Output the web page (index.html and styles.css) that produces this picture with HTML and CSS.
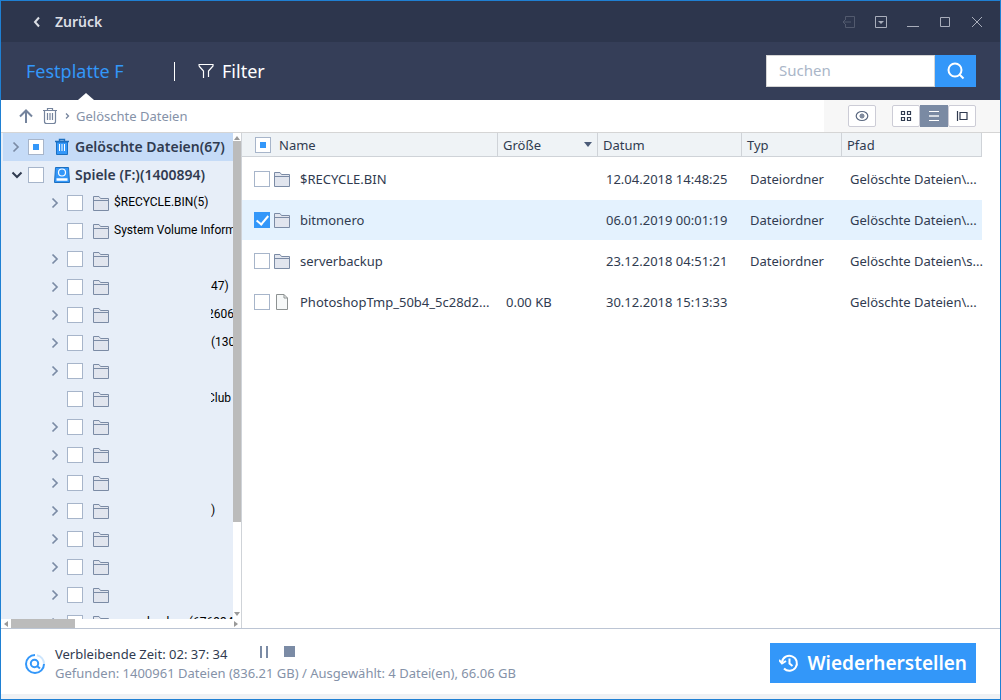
FILE: index.html
```html
<!DOCTYPE html>
<html lang="de">
<head>
<meta charset="utf-8">
<title>Datenrettung</title>
<link rel="stylesheet" href="styles.css">
</head>
<body>
<svg class="defs" aria-hidden="true">
  <symbol id="folder" viewBox="0 0 18 18"><path d="M1.500 16.500V2.500H7L8.500 4.500H16.500V16.500Z" fill="#e1e5ee" stroke="#7b8ba5"/><path d="M1.500 6.500H16.500" stroke="#7b8ba5"/></symbol>
  <symbol id="chev" viewBox="0 0 8 12"><path d="M1.500 1.500L6 6L1.500 10.500" fill="none" stroke="currentColor" stroke-width="1.700"/></symbol>
</svg>
<div class="window">
  <header class="titlebar">
    <button class="back"><svg width="8" height="12" viewBox="0 0 8 12"><path d="M6 1.500L2 6L6 10.500" fill="none" stroke="currentColor" stroke-width="2"/></svg>Zurück</button>
    <div class="winctl">
      <button class="dim" aria-label="Exportieren"><svg width="14" height="14" viewBox="0 0 14 14"><path d="M3.500 4V1.500H12.500V12.500H3.500V10M9 7H1M4 4L1 7L4 10" fill="none" stroke="currentColor"/></svg></button>
      <button aria-label="Menü"><svg width="14" height="14" viewBox="0 0 14 14"><path d="M1.500 1.500H12.500V12.500H1.500Z" fill="none" stroke="currentColor"/><path d="M4 6H10L7 9Z" fill="currentColor"/></svg></button>
      <button aria-label="Minimieren"><svg width="14" height="14" viewBox="0 0 14 14"><path d="M1 11.500H13" stroke="currentColor"/></svg></button>
      <button aria-label="Maximieren"><svg width="14" height="14" viewBox="0 0 14 14"><path d="M2.500 2.500H11.500V11.500H2.500Z" fill="none" stroke="currentColor"/></svg></button>
      <button aria-label="Schließen"><svg width="14" height="14" viewBox="0 0 14 14"><path d="M2 2L12 12M12 2L2 12" stroke="currentColor"/></svg></button>
    </div>
  </header>
  <nav class="nav">
    <a class="tab" href="#f">Festplatte F</a>
    <button class="filter"><svg width="16" height="16" viewBox="0 0 16 16"><path d="M1 1.500H15V3L10.500 8V14M1 3L5.500 8V15" fill="none" stroke="currentColor" stroke-width="1.200"/><path d="M1 1V3" stroke="currentColor"/></svg>Filter</button>
    <form class="search"><input type="text" placeholder="Suchen" aria-label="Suchen"><button type="button" aria-label="Suche starten"><svg width="20" height="20" viewBox="0 0 20 20" fill="none" stroke="#fff" stroke-width="2"><circle cx="9" cy="9" r="6.500"/><path d="M13.500 13.500L17.500 17.500"/></svg></button></form>
  </nav>
  <div class="toolbar">
    <button class="up" aria-label="Nach oben"><svg width="14" height="14" viewBox="0 0 14 14"><path d="M7 14V2M1 7.500L7 1.500L13 7.500" fill="none" stroke="#75849d" stroke-width="2"/></svg></button>
    <button class="bin" aria-label="Papierkorb"><svg width="16" height="18" viewBox="0 0 16 18"><path d="M1 3.500H15M5.500 3V1.500H10.500V3M2.500 4V14.500Q2.500 16.500 4.500 16.500H11.500Q13.500 16.500 13.500 14.500V4M5.500 6V13M8 6V13M10.500 6V13" fill="none" stroke="#75849d" stroke-width="1.200"/></svg></button>
    <svg class="sep" width="5" height="8" viewBox="0 0 5 8"><path d="M1 1.500L3.500 4L1 6.500" fill="none" stroke="#75849d" stroke-width="1.300"/></svg>
    <a class="crumb" href="#d">Gelöschte Dateien</a>
    <div class="views">
      <button class="eye" aria-label="Vorschau"><svg width="14" height="12" viewBox="0 0 14 12" fill="none" stroke="#59677f"><ellipse cx="7" cy="6" rx="5.800" ry="4.500" stroke-width="1.200"/><circle cx="7" cy="6" r="2"/><circle cx="7" cy="6" r="1"/></svg></button>
      <div class="group">
        <button aria-label="Kacheln"><svg width="12" height="12" viewBox="0 0 12 12" fill="none" stroke="#303b50" stroke-width="1.200"><path d="M1.500 1.500h3v3h-3zM7.500 1.500h3v3h-3zM1.500 7.500h3v3h-3zM7.500 7.500h3v3h-3z"/></svg></button>
        <button class="on" aria-label="Liste"><svg width="12" height="12" viewBox="0 0 12 12" stroke="#fff"><path d="M1 1.500H11M1 10.500H11"/><path d="M1 6H11" stroke-width="2" opacity=".7"/></svg></button>
        <button aria-label="Details"><svg width="12" height="12" viewBox="0 0 12 12" fill="none" stroke="#303b50" stroke-width="1.200"><path d="M1.500 1V11M4 2.500H11V9.500H4Z"/></svg></button>
      </div>
    </div>
  </div>
  <main class="content">
    <aside class="side">
      <div class="treewrap">
        <ul class="tree">
          <li class="root sel"><svg class="tw"><use href="#chev"/></svg><input class="mixed" type="checkbox" id="t1"><svg class="ic" viewBox="0 0 16 18"><path d="M2.500 4H13.500V16.500H2.500Z" fill="#3397f9" stroke="#1c6fc0"/><path d="M1 3.500H15M5.500 3V1.500H10.500V3" fill="none" stroke="#1c6fc0" stroke-width="1.400"/><path d="M5.500 6V13M8 6V13M10.500 6V13" stroke="#fff"/></svg><label for="t1">Gelöschte Dateien(67)</label></li>
          <li class="root"><svg class="tw down" viewBox="0 0 12 8"><path d="M1.500 1.500L6 6L10.500 1.500" fill="none" stroke="currentColor" stroke-width="2"/></svg><input type="checkbox" id="t2"><svg class="ic" viewBox="0 0 16 18"><path d="M1.500 1.500H14.500L15.500 16.500H.5Z" fill="#3397f9" stroke="#1c6fc0"/><circle cx="8" cy="6.500" r="3.500" fill="none" stroke="#fff" stroke-width="1.200"/><path d="M2.500 13.500H13.500" stroke="#fff" stroke-width="2.500"/></svg><label for="t2">Spiele (F:)(1400894)</label></li>
          <li><svg class="tw"><use href="#chev"/></svg><input type="checkbox" id="t3"><svg class="fd"><use href="#folder"/></svg><label for="t3">$RECYCLE.BIN(5)</label></li>
          <li><span class="tw"></span><input type="checkbox" id="t4"><svg class="fd"><use href="#folder"/></svg><label for="t4">System Volume Inform</label></li>
          <li><svg class="tw"><use href="#chev"/></svg><input type="checkbox" aria-label="Ordner"><svg class="fd"><use href="#folder"/></svg></li>
          <li><svg class="tw"><use href="#chev"/></svg><input type="checkbox" id="t6"><svg class="fd"><use href="#folder"/></svg><label class="part" for="t6">47)</label></li>
          <li><svg class="tw"><use href="#chev"/></svg><input type="checkbox" id="t7"><svg class="fd"><use href="#folder"/></svg><label class="part cut" for="t7">2606)</label></li>
          <li><svg class="tw"><use href="#chev"/></svg><input type="checkbox" id="t8"><svg class="fd"><use href="#folder"/></svg><label class="part" for="t8">(130</label></li>
          <li><svg class="tw"><use href="#chev"/></svg><input type="checkbox" aria-label="Ordner"><svg class="fd"><use href="#folder"/></svg></li>
          <li><span class="tw"></span><input type="checkbox" id="t10"><svg class="fd"><use href="#folder"/></svg><label class="part cut" for="t10">Club</label></li>
          <li><svg class="tw"><use href="#chev"/></svg><input type="checkbox" aria-label="Ordner"><svg class="fd"><use href="#folder"/></svg></li>
          <li><svg class="tw"><use href="#chev"/></svg><input type="checkbox" aria-label="Ordner"><svg class="fd"><use href="#folder"/></svg></li>
          <li><svg class="tw"><use href="#chev"/></svg><input type="checkbox" aria-label="Ordner"><svg class="fd"><use href="#folder"/></svg></li>
          <li><svg class="tw"><use href="#chev"/></svg><input type="checkbox" id="t14"><svg class="fd"><use href="#folder"/></svg><label class="part" for="t14">)</label></li>
          <li><svg class="tw"><use href="#chev"/></svg><input type="checkbox" aria-label="Ordner"><svg class="fd"><use href="#folder"/></svg></li>
          <li><svg class="tw"><use href="#chev"/></svg><input type="checkbox" aria-label="Ordner"><svg class="fd"><use href="#folder"/></svg></li>
          <li><svg class="tw"><use href="#chev"/></svg><input type="checkbox" aria-label="Ordner"><svg class="fd"><use href="#folder"/></svg></li>
          <li><svg class="tw"><use href="#chev"/></svg><input type="checkbox" id="t18"><svg class="fd"><use href="#folder"/></svg><label for="t18">serverbackup (676934)</label></li>
        </ul>
        <div class="vbar"><svg width="8" height="6" viewBox="0 0 8 6"><path d="M1 5L4 1L7 5Z"/></svg><span class="vthumb"></span><span class="rest"></span><svg width="8" height="6" viewBox="0 0 8 6"><path d="M1 1L4 5L7 1Z"/></svg></div>
      </div>
      <div class="hbar"><svg width="6" height="8" viewBox="0 0 6 8"><path d="M5 1L1 4L5 7Z"/></svg><span class="hthumb"></span><span class="rest"></span><svg width="6" height="8" viewBox="0 0 6 8"><path d="M1 1L5 4L1 7Z"/></svg></div>
    </aside>
    <section class="files">
      <table>
        <colgroup><col><col class="c-size"><col class="c-date"><col class="c-type"><col class="c-path"></colgroup>
        <thead><tr>
          <th><div class="cell"><input class="mixed" type="checkbox" id="all"><label for="all">Name</label></div></th>
          <th><div class="cell sort">Größe<svg width="8" height="5" viewBox="0 0 8 5"><path d="M0 0H8L4 5Z" fill="#4b5b78"/></svg></div></th>
          <th>Datum</th><th>Typ</th><th>Pfad</th>
        </tr></thead>
        <tbody>
          <tr><td><div class="cell"><input type="checkbox" id="f1"><svg class="fd"><use href="#folder"/></svg><label for="f1">$RECYCLE.BIN</label></div></td><td></td><td>12.04.2018 14:48:25</td><td>Dateiordner</td><td>Gelöschte Dateien\...</td></tr>
          <tr class="picked"><td><div class="cell"><input type="checkbox" id="f2" checked><svg class="fd"><use href="#folder"/></svg><label for="f2">bitmonero</label></div></td><td></td><td>06.01.2019 00:01:19</td><td>Dateiordner</td><td>Gelöschte Dateien\...</td></tr>
          <tr><td><div class="cell"><input type="checkbox" id="f3"><svg class="fd"><use href="#folder"/></svg><label for="f3">serverbackup</label></div></td><td></td><td>23.12.2018 04:51:21</td><td>Dateiordner</td><td>Gelöschte Dateien\s...</td></tr>
          <tr><td><div class="cell"><input type="checkbox" id="f4"><svg class="fd" viewBox="0 0 18 18"><path d="M3.500 1.500H11L14.500 5V16.500H3.500Z" fill="#f6f8f8" stroke="#8d9292"/><path d="M11 1.500V5H14.500" fill="none" stroke="#8d9292"/></svg><label for="f4">PhotoshopTmp_50b4_5c28d2...</label></div></td><td>0.00 KB</td><td>30.12.2018 15:13:33</td><td></td><td>Gelöschte Dateien\...</td></tr>
        </tbody>
      </table>
    </section>
  </main>
  <footer class="footer">
    <svg class="scan" width="22" height="22" viewBox="0 0 22 22" fill="none" stroke="#3397f9"><path d="M11 2A9 9 0 1 0 20 11" stroke-width="2"/><path d="M13 2.200A9 9 0 0 1 20 11" stroke-width="2" opacity=".25"/><circle cx="10.500" cy="10.500" r="3.700" stroke-width="2"/><path d="M13 13L16 15.500" stroke-width="2"/></svg>
    <div class="status">
      <div class="line">Verbleibende Zeit: 02: 37: 34
        <button class="pause" aria-label="Pause"><svg width="10" height="12" viewBox="0 0 10 12"><path d="M2 0V12M8 0V12" stroke="#7b8ba5" stroke-width="2"/></svg></button>
        <button class="stop" aria-label="Stopp"><svg width="12" height="12" viewBox="0 0 12 12"><path d="M0 0H11V11H0Z" fill="#7b8ba5"/></svg></button>
      </div>
      <div class="found">Gefunden: 1400961 Dateien (836.21 GB) / Ausgewählt: 4 Datei(en), 66.06 GB</div>
    </div>
    <button class="restore"><svg width="20" height="20" viewBox="0 0 20 20" fill="none" stroke="#fff" stroke-width="2"><path d="M3 9A7.500 7.500 0 1 1 5 15.500"/><path d="M10.500 5.500V10.500L13.500 13"/><path d="M0 7L3 10.500L7 8" /></svg>Wiederherstellen</button>
  </footer>
</div>
</body>
</html>
```
FILE: styles.css
```css
* { box-sizing: border-box; }
body { margin: 0; font: 13px/18px "Noto Sans", "Open Sans", sans-serif; color: #303b50; }
button { border: 0; padding: 0; background: none; font: inherit; color: inherit; display: flex; align-items: center; }
a { text-decoration: none; }
svg { display: block; flex: none; }
.defs { position: absolute; width: 0; height: 0; }

.window { height: 100vh; display: flex; flex-direction: column; border: 1px solid #1f80d3; background: #fff; }

.titlebar { height: 41px; flex: none; display: flex; align-items: center; justify-content: space-between; padding: 0 16px 0 32px; background: #2d364d; }
.back { gap: 14px; color: #dcdfe5; font-size: 14px; font-weight: 600; line-height: 20px; }
.winctl { display: flex; gap: 18px; color: #a9aebb; }
.dim { color: #525a6e; }

.nav { height: 58px; flex: none; display: flex; align-items: center; padding: 0 24px 0 25px; background: #353e58; }
.tab { position: relative; align-self: stretch; display: flex; align-items: center; width: 148px; color: #3397f9; font-size: 18px; }
.tab::after { content: ""; position: absolute; left: 52px; bottom: 0; border: 8px solid transparent; border-top: 0; border-bottom: 7px solid #fff; }
.filter { gap: 8px; padding-left: 23px; border-left: 1px solid #fff; color: #fff; font-size: 18px; line-height: 19px; }
.search { display: flex; margin-left: auto; height: 32px; }
.search input { width: 169px; padding: 0 12px 2px; border: 1px solid #d5d5d5; background: #fff; font: 15px "Noto Sans", sans-serif; color: #303b50; }
.search input::placeholder { color: #aab6c8; }
.search button { width: 41px; justify-content: center; background: #3397f9; }

.toolbar { height: 33px; flex: none; display: flex; align-items: center; padding-left: 18px; border-bottom: 1px solid #d5d5d5; }
.bin { margin-left: 9px; }
.sep { margin: 0 6px 0 7px; }
.crumb { color: #8592a8; }
.views { align-self: stretch; display: flex; align-items: center; gap: 16px; margin-left: auto; padding: 0 24px; background: #f7f7f7; }
.views button { width: 28px; height: 22px; justify-content: center; background: #fff; border: 1px solid #ccccd6; border-radius: 2px; }
.views .group { display: flex; }
.views .group .on { background: #7a8aa3; border-color: #7a8aa3; border-radius: 0; }

.content { flex: 1; min-height: 0; display: flex; }
.side { width: 241px; flex: none; display: flex; flex-direction: column; border-right: 1px solid #cfd3d8; }
.treewrap { flex: 1; min-height: 0; display: flex; }
.tree { flex: 1; min-width: 0; margin: 0; padding: 0 0 0 2px; list-style: none; overflow: hidden; background: #e7eef8; }
.tree li { display: flex; align-items: center; height: 28px; padding-left: 48px; white-space: nowrap; overflow: hidden; color: #000; font-family: Roboto, "Noto Sans", sans-serif; font-size: 12px; line-height: 16px; }
.tree label { padding-bottom: 2px; margin-left: 4px; }
.tree .root { padding-left: 8px; font-family: "Noto Sans", sans-serif; font-size: 14px; font-weight: 600; color: #303b50; }
.tree .root label { margin-left: 5px; padding: 0; }
.tree .sel { background: #c5dbf7; }
.tw { width: 8px; height: 12px; margin-right: 8px; color: #7b8ba5; flex: none; }
.root .tw { margin-left: 1px; }
.tree .root .down { width: 12px; height: 8px; margin: 0 5px 0 0; color: #303b50; }
.ic { width: 16px; height: 18px; margin-left: 10px; }
.fd { width: 18px; height: 18px; }
.tree .fd { margin-left: 9px; }
.tree .part { margin-left: 101px; overflow: hidden; }
.tree .cut { text-indent: -4px; }

input[type="checkbox"] { appearance: none; flex: none; display: grid; place-items: center; width: 16px; height: 16px; margin: 0; border: 1px solid #a7b5ca; background: #fff; }
input.mixed::after { content: ""; width: 6px; height: 6px; background: #3397f9; }
input[type="checkbox"]:checked { padding-bottom: 2px; border-color: #3397f9; background: #3397f9; }
input:checked::after { content: ""; width: 5px; height: 10px; border: solid #fff; border-width: 0 2px 2px 0; transform: rotate(40deg); }

.vbar, .hbar { display: flex; align-items: center; background: #fff; fill: #999; }
.vbar { width: 8px; flex-direction: column; padding: 2px 0; }
.hbar { height: 9px; padding: 0 2px; }
.vthumb { width: 8px; height: 79%; background: #bbb; }
.hthumb { width: 64px; height: 9px; margin-left: 2px; background: #bbb; }
.rest { flex: 1; }

.files { flex: 1; min-width: 0; padding-right: 18px; }
table { width: 100%; border-collapse: separate; border-spacing: 0; table-layout: fixed; }
.c-size { width: 100px; }
.c-date { width: 144px; }
.c-type { width: 100px; }
.c-path { width: 140px; }
th { height: 24px; padding: 0 5px; text-align: left; font-weight: 400; background: #eff3f6; border: solid #cfd3d8; border-width: 0 1px 1px 0; }
td { height: 41px; padding: 0 0 0 8px; white-space: nowrap; border-bottom: 1px solid #fff; }
tbody::before { content: ""; display: block; height: 2px; }
th:first-child { padding-left: 13px; }
td:first-child { padding-left: 12px; }
.cell { display: flex; align-items: center; }
th label { margin-left: 8px; }
td .fd { margin-left: 3px; }
td label { margin-left: 9px; }
.sort { justify-content: space-between; }
.picked td { background: #e4f2fe; }

.footer { flex: none; display: flex; align-items: center; height: 71px; padding: 0 24px 0 23px; border-top: 1px solid #bcc5d4; border-bottom: 5px solid #eff1f4; }
.scan { margin-top: 4px; }
.status { margin-left: 9px; margin-top: 2px; }
.line { display: flex; align-items: center; height: 20px; }
.pause { margin: 0 15px 4px 32px; }
.stop { margin-bottom: 4px; }
.found { color: #8592a8; }
.restore { gap: 8px; height: 40px; margin: 3px 0 0 auto; padding: 0 9px; background: #3397f9; color: #fff; font-size: 19px; font-weight: 600; }
```
